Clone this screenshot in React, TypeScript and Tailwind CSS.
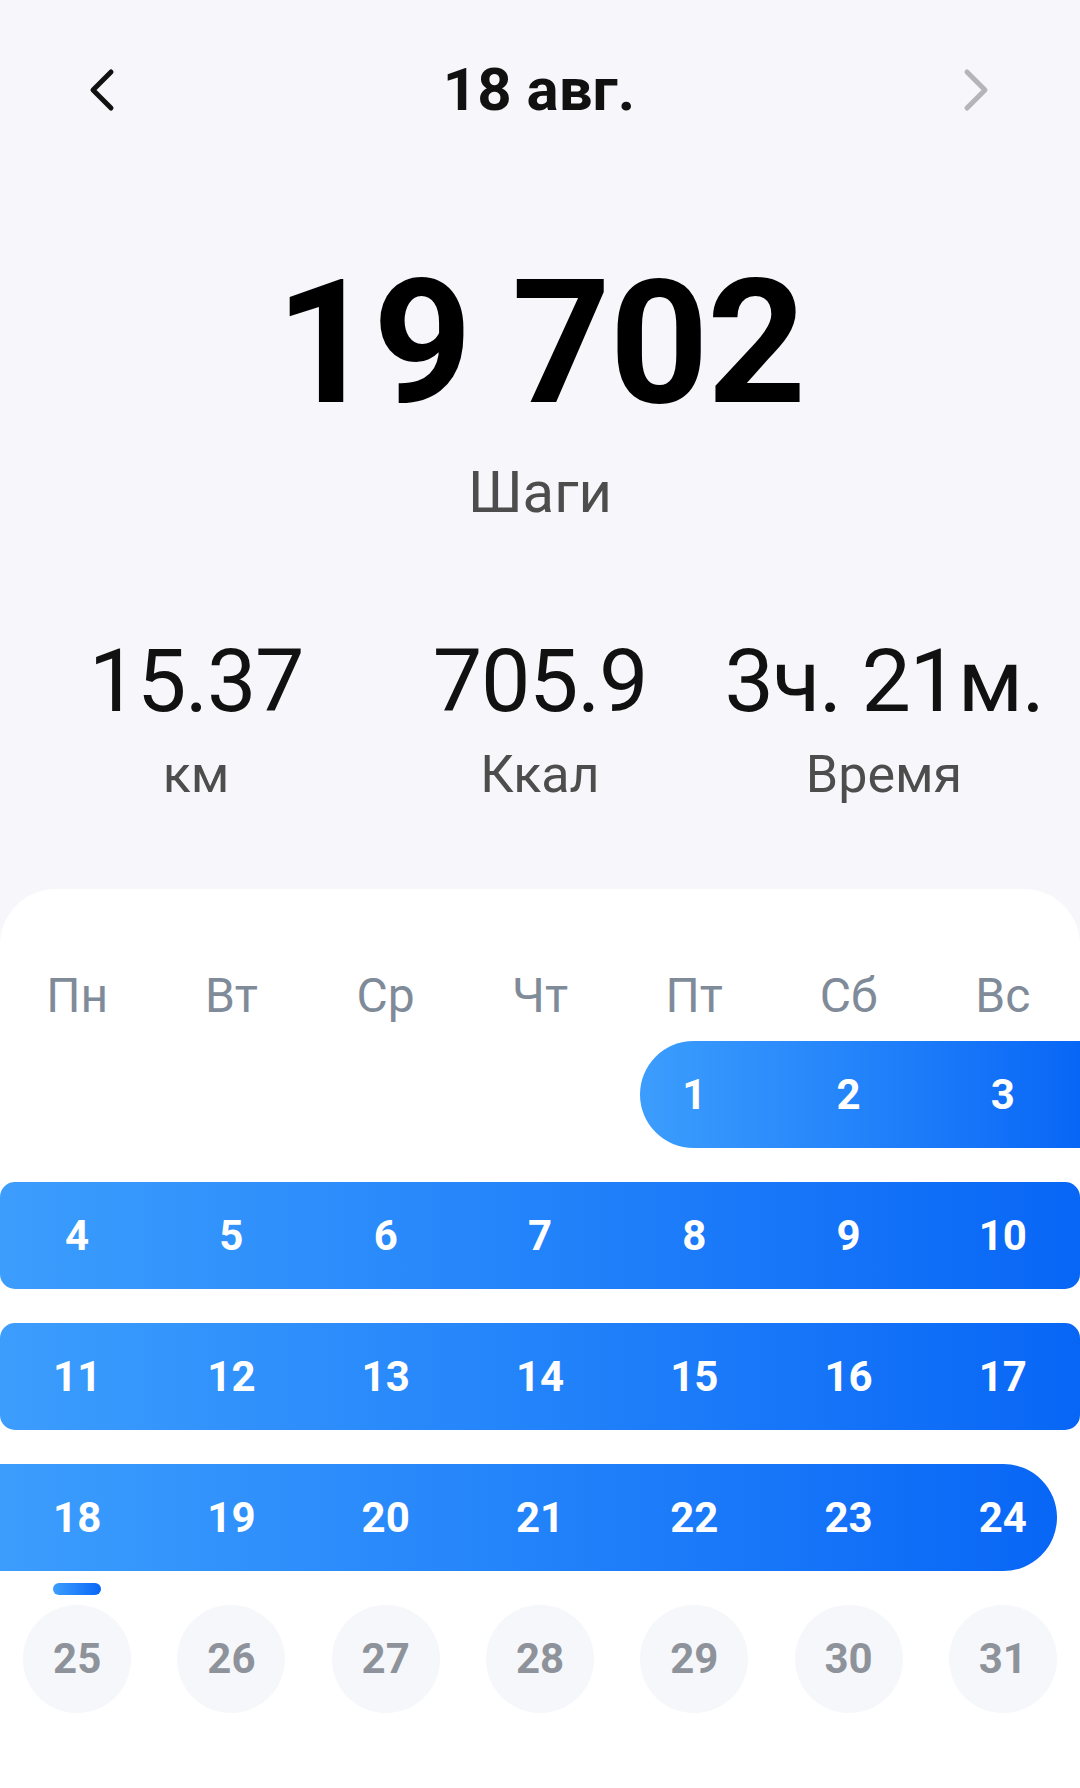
import React from "react";

const weekDays = ["Пн", "Вт", "Ср", "Чт", "Пт", "Сб", "Вс"];

const stats = [
  { value: "15.37", label: "км" },
  { value: "705.9", label: "Ккал" },
  { value: "3ч. 21м.", label: "Время" },
];

// selected weeks of the month (1..24)
const weeks = [
  { days: [1, 2, 3], bar: "col-start-5 col-end-8 ml-[23px] rounded-l-full rounded-r-[15px]", start: 5 },
  { days: [4, 5, 6, 7, 8, 9, 10], bar: "col-start-1 col-end-8 rounded-[15px]", start: 1 },
  { days: [11, 12, 13, 14, 15, 16, 17], bar: "col-start-1 col-end-8 rounded-[15px]", start: 1 },
  { days: [18, 19, 20, 21, 22, 23, 24], bar: "col-start-1 col-end-8 mr-[23px] rounded-l-[15px] rounded-r-full", start: 1 },
];

const colStart: Record<number, string> = {
  1: "col-start-1",
  2: "col-start-2",
  3: "col-start-3",
  4: "col-start-4",
  5: "col-start-5",
  6: "col-start-6",
  7: "col-start-7",
};

const Chevron = ({ dir, color }: { dir: "left" | "right"; color: string }) => (
  <svg width="28" height="44" viewBox="0 0 28 44" fill="none">
    <path
      d={dir === "left" ? "M23 4 L5 22 L23 40" : "M5 4 L23 22 L5 40"}
      stroke={color}
      strokeWidth="5"
      strokeLinecap="round"
      strokeLinejoin="round"
    />
  </svg>
);

export default function App() {
  return (
    <div
      className="w-[1080px] h-[1788px] overflow-hidden bg-[#f7f7fb] flex flex-col"
      style={{ fontFamily: "Roboto, 'Noto Sans', sans-serif" }}
    >
      {/* Header */}
      <div className="flex items-center justify-between h-[44px] mt-[68px] pl-[88px] pr-[90px]">
        <Chevron dir="left" color="#111111" />
        <h1 className="text-[60px] leading-none font-bold text-[#111111]">18 авг.</h1>
        <Chevron dir="right" color="#b5b5b8" />
      </div>

      {/* Steps */}
      <div className="flex flex-col items-center">
        <div className="mt-[145px] text-[173px] leading-none font-bold text-black tracking-[-0.01em]">
          19 702
        </div>
        <div className="mt-[33px] text-[58px] leading-none text-[#4d4d4d]">Шаги</div>
      </div>

      {/* Stats */}
      <div className="grid grid-cols-3 px-6 mt-[116px]">
        {stats.map((s) => (
          <div key={s.label} className="flex flex-col items-center">
            <div className="text-[88px] leading-none text-[#111111] tracking-[-0.015em] whitespace-nowrap">
              {s.value}
            </div>
            <div className="mt-[24px] text-[52px] leading-none text-[#4d4d4d]">{s.label}</div>
          </div>
        ))}
      </div>

      {/* Calendar */}
      <div className="mt-[88px] flex-1 bg-white rounded-t-[56px] pt-[83px]">
        <div className="grid grid-cols-7">
          {weekDays.map((d) => (
            <div key={d} className="text-center text-[48px] leading-none text-[#7f8b99]">
              {d}
            </div>
          ))}
        </div>

        <div className="mt-[21px] flex flex-col gap-[34px]">
          {weeks.map((w, i) => (
            <div key={i} className="grid grid-cols-7 h-[107px]">
              <div
                className={`row-start-1 h-[107px] bg-linear-to-r from-[#3c9dfd] to-[#0866f6] ${w.bar}`}
              />
              {w.days.map((d, j) => (
                <div
                  key={d}
                  className={`row-start-1 ${colStart[w.start + j]} flex items-center justify-center text-[42px] leading-none font-bold text-white`}
                >
                  {d}
                </div>
              ))}
            </div>
          ))}
        </div>

        {/* today marker */}
        <div className="grid grid-cols-7 mt-[12px]">
          <div className="flex justify-center">
            <div className="w-[48px] h-[12px] rounded-full bg-linear-to-r from-[#3c9dfd] to-[#0866f6]" />
          </div>
        </div>

        <div className="grid grid-cols-7 mt-[10px]">
          {[25, 26, 27, 28, 29, 30, 31].map((d) => (
            <div key={d} className="flex justify-center">
              <div className="w-[108px] h-[108px] rounded-full bg-[#f6f7fa] flex items-center justify-center text-[42px] leading-none font-bold text-[#8e939b]">
                {d}
              </div>
            </div>
          ))}
        </div>
      </div>
    </div>
  );
}
